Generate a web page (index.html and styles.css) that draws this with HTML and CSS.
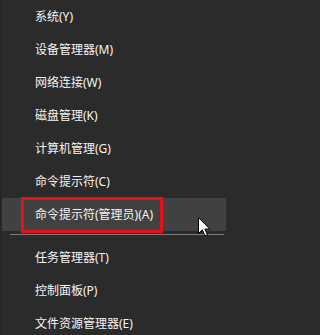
FILE: index.html
```html
<!DOCTYPE html>
<html lang="zh-CN">
<head>
<meta charset="utf-8">
<title>Win+X 菜单</title>
<link rel="stylesheet" href="styles.css">
</head>
<body>
<div class="menu">
  <div class="item">系统(Y)</div>
  <div class="item">设备管理器(M)</div>
  <div class="item">网络连接(W)</div>
  <div class="item">磁盘管理(K)</div>
  <div class="item">计算机管理(G)</div>
  <div class="item">命令提示符(C)</div>
  <div class="item active">命令提示符(管理员)(A)<span class="mark"></span>
    <svg class="cursor" width="13" height="20" viewBox="0 0 13 20"><path d="M0.5 0.5 L0.5 16.5 L4.3 12.8 L7 18.8 L9.4 17.8 L6.8 12 L11.8 12 Z" fill="#fff" stroke="#000" stroke-width="1"/></svg>
  </div>
  <div class="sep"></div>
  <div class="item">任务管理器(T)</div>
  <div class="item">控制面板(P)</div>
  <div class="item">文件资源管理器(E)</div>
</div>
</body>
</html>
```
FILE: styles.css
```css
html, body {
  margin: 0;
  padding: 0;
  background: #2b2b2b;
  overflow: hidden;
}
.menu {
  width: 229px;
  height: 335px;
  border-left: 2px solid #262626;
  box-sizing: border-box;
  font-family: "Noto Sans", "Noto Sans CJK SC", sans-serif;
  font-size: 12px;
  color: #f4f4f4;
  display: flex;
  flex-direction: column;
}
.item {
  position: relative;
  height: 33px;
  flex: none;
  display: flex;
  align-items: center;
  padding-left: 33px;
  line-height: 14px;
  margin-right: 1px;
}
.item.active {
  background: #414141;
  margin-right: 3px;
}
.mark {
  position: absolute;
  left: 19px;
  top: -1px;
  width: 142px;
  height: 36px;
  border: 3px solid #e3111b;
  box-sizing: border-box;
}
.cursor {
  position: absolute;
  left: 196px;
  top: 19px;
}
.sep {
  flex: none;
  height: 1px;
  background: #7c7c7c;
  margin: 3px 5px 6px 8px;
}
```
